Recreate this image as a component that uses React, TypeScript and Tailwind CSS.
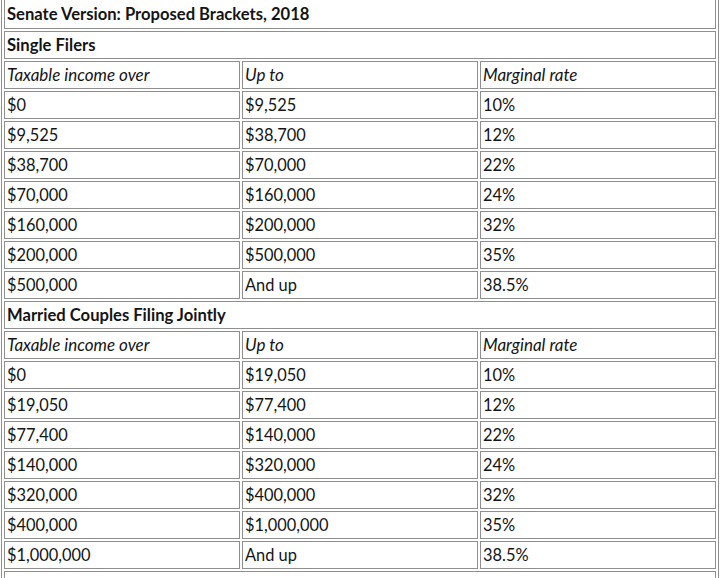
const single = [
  ["$0", "$9,525", "10%"],
  ["$9,525", "$38,700", "12%"],
  ["$38,700", "$70,000", "22%"],
  ["$70,000", "$160,000", "24%"],
  ["$160,000", "$200,000", "32%"],
  ["$200,000", "$500,000", "35%"],
  ["$500,000", "And up", "38.5%"],
];

const married = [
  ["$0", "$19,050", "10%"],
  ["$19,050", "$77,400", "12%"],
  ["$77,400", "$140,000", "22%"],
  ["$140,000", "$320,000", "24%"],
  ["$320,000", "$400,000", "32%"],
  ["$400,000", "$1,000,000", "35%"],
  ["$1,000,000", "And up", "38.5%"],
];

const cell = "h-[28px] border border-[#8f8f8f] px-[2px] py-0 align-middle leading-[24px]";
const head = `${cell} font-bold text-[16.6px]`;
const label = `${cell} italic text-[17px]`;
const value = `${cell} text-[16.4px]`;

function Group({ title, rows }: { title: string; rows: string[][] }) {
  return (
    <>
      <tr>
        <td colSpan={3} className={head}>
          {title}
        </td>
      </tr>
      <tr>
        <td className={label}>Taxable income over</td>
        <td className={label}>Up to</td>
        <td className={label}>Marginal rate</td>
      </tr>
      {rows.map((r) => (
        <tr key={r[0]}>
          <td className={value}>{r[0]}</td>
          <td className={value}>{r[1]}</td>
          <td className={value}>{r[2]}</td>
        </tr>
      ))}
    </>
  );
}

export default function App() {
  return (
    <div className="h-[578px] w-[720px] overflow-hidden bg-white">
      <table
        className="ml-[1px] mt-[-4px] w-[718px] table-fixed border-separate border-spacing-[2px] border border-[#8f8f8f] text-[#141414]"
        style={{ fontFamily: "Lato, 'Open Sans', sans-serif" }}
      >
        <tbody>
          <tr>
            <td colSpan={3} className={`${head} h-[30px]`}>
              Senate Version: Proposed Brackets, 2018
            </td>
          </tr>
          <Group title="Single Filers" rows={single} />
          <Group title="Married Couples Filing Jointly" rows={married} />
          <tr>
            <td colSpan={3} className={value}>
              &nbsp;
            </td>
          </tr>
        </tbody>
      </table>
    </div>
  );
}
